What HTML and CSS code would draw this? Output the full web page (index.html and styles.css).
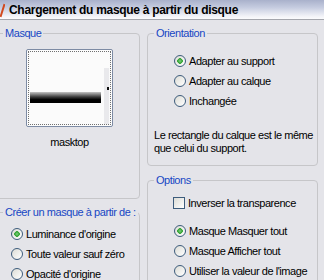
FILE: index.html
```html
<!DOCTYPE html>
<html lang="fr">
<head>
    <meta charset="UTF-8">
    <title>Chargement du masque à partir du disque</title>
    <link rel="stylesheet" href="styles.css">
</head>
<body>
    <div class="titlebar">
        <svg class="app-icon" width="5" height="16" viewBox="0 0 5 16">
            <path d="M4.5 2 L0.5 15" stroke="#d2491e" stroke-width="2" fill="none"/>
        </svg>
        <span class="title">Chargement du masque à partir du disque</span>
    </div>

    <div class="dialog">
        <!-- left column -->
        <div class="col col-left">
            <fieldset class="group group-mask">
                <legend>Masque</legend>
                <div class="preview">
                    <div class="thumb">
                        <div class="thumb-inner">
                            <div class="mask-bar"></div>
                            <div class="thumb-scroll"><span class="thumb-arrow"></span></div>
                        </div>
                    </div>
                    <div class="thumb-name">masktop</div>
                </div>
            </fieldset>

            <fieldset class="group group-source">
                <legend>Créer un masque à partir de :</legend>
                <ul class="choices">
                    <li><span class="radio checked"></span>Luminance d'origine</li>
                    <li><span class="radio"></span>Toute valeur sauf zéro</li>
                    <li><span class="radio"></span>Opacité d'origine</li>
                </ul>
            </fieldset>
        </div>

        <!-- right column -->
        <div class="col col-right">
            <fieldset class="group group-orient">
                <legend>Orientation</legend>
                <ul class="choices">
                    <li><span class="radio checked"></span>Adapter au support</li>
                    <li><span class="radio"></span>Adapter au calque</li>
                    <li><span class="radio"></span>Inchangée</li>
                </ul>
                <p class="note">Le rectangle du calque est le même<br>que celui du support.</p>
            </fieldset>

            <fieldset class="group group-options">
                <legend>Options</legend>
                <ul class="choices">
                    <li class="check-row"><span class="checkbox"></span>Inverser la transparence</li>
                    <li><span class="radio checked"></span>Masque Masquer tout</li>
                    <li><span class="radio"></span>Masque Afficher tout</li>
                    <li><span class="radio"></span>Utiliser la valeur de l'image</li>
                </ul>
            </fieldset>
        </div>
    </div>
</body>
</html>
```

FILE: styles.css
```css
body {
    margin: 0;
    width: 324px;
    height: 280px;
    overflow: hidden;
    background-color: #e4e4e9;
    font-family: "Liberation Sans", Arial, sans-serif;
    font-size: 11px;
    letter-spacing: -0.45px;
    color: #000;
}

/* Title bar */
.titlebar {
    height: 19px;
    display: flex;
    align-items: center;
    border-bottom: 1px solid #a4a6ad;
    background: linear-gradient(#a9b1cb, #c6cce0 40%, #f2f3f8 85%, #fbfbfd);
}

.app-icon {
    flex: none;
    margin-right: 4px;
}

.title {
    font-weight: bold;
    font-size: 12px;
    letter-spacing: -0.3px;
}

/* Dialog body */
.dialog {
    display: grid;
    grid-template-columns: 144px 171px;
    column-gap: 7px;
    margin-left: -4px;
    padding-top: 7px;
}

.col {
    display: flex;
    flex-direction: column;
}

.col-left {
    gap: 7px;
}

.col-right {
    gap: 8px;
}

.group {
    margin: 0;
    padding: 0;
    border: 1px solid #c6c6c9;
    border-radius: 4px;
    min-width: 0;
    box-sizing: border-box;
}

.group legend {
    margin-left: 6px;
    padding: 0 2px;
    line-height: 13px;
    color: #1747c4;
}

.group-mask {
    height: 172px;
}

.group-source {
    height: 120px;
}

.group-orient {
    height: 139px;
}

.group-options {
    height: 120px;
}

/* Mask preview */
.preview {
    width: 87px;
    margin: 9px 0 0 29px;
}

.thumb {
    height: 78px;
    box-sizing: border-box;
    border: 1px solid #7d8ba4;
    border-radius: 2px;
    padding: 1px;
    background-color: #fdfdfd;
}

.thumb-inner {
    height: 100%;
    box-sizing: border-box;
    border: 1px dotted #707070;
    display: flex;
    align-items: flex-start;
    background-color: #fbfbfb;
}

.mask-bar {
    width: 71px;
    height: 11px;
    margin: 40px 0 0 1px;
    background: linear-gradient(#c4c4c4, #3a3a3a 45%, #000 70%, #000);
}

.thumb-scroll {
    margin: 16px 1px 0 auto;
    width: 5px;
    height: 56px;
    background-color: #e9e9ec;
    display: flex;
    justify-content: flex-end;
}

.thumb-arrow {
    margin-top: 19px;
    width: 2px;
    height: 3px;
    background-color: #111;
}

.thumb-name {
    margin-top: 9px;
    line-height: 13px;
    text-align: center;
}

/* Radio / checkbox lists */
.choices {
    list-style: none;
    margin: 0;
    padding: 0;
}

.choices li {
    height: 20px;
    display: flex;
    align-items: center;
    gap: 3px;
    white-space: nowrap;
}

.group-source .choices {
    margin: 5px 0 0 14px;
}

.group-orient .choices {
    margin: 11px 0 0 26px;
}

.group-options .choices {
    margin: 6px 0 0 26px;
}

.group-options .check-row {
    margin-bottom: 8px;
}

.radio {
    flex: none;
    width: 12px;
    height: 12px;
    box-sizing: border-box;
    border: 1px solid #3d5c7c;
    border-radius: 50%;
    background: linear-gradient(135deg, #dcdcd6, #ffffff);
}

.radio.checked {
    background: radial-gradient(circle, #7fd07f 0, #2b9f2b 2.5px, transparent 3px),
                linear-gradient(135deg, #dcdcd6, #ffffff);
}

.checkbox {
    flex: none;
    width: 12px;
    height: 12px;
    margin-left: -1px;
    box-sizing: border-box;
    border: 1px solid #3d5c7c;
    background: linear-gradient(135deg, #dcdcd6, #ffffff);
}

.note {
    margin: 18px 0 0 6px;
    line-height: 13px;
    white-space: nowrap;
}
```
